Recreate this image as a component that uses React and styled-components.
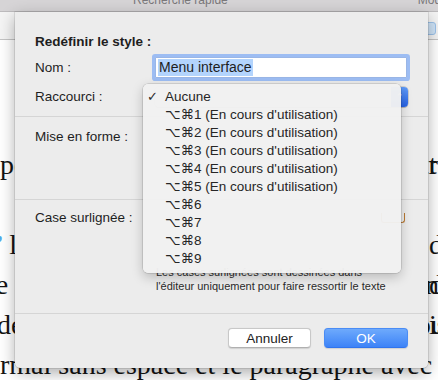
import React from 'react';
import styled, { createGlobalStyle } from 'styled-components';

const GlobalStyle = createGlobalStyle`
  html, body { margin: 0; padding: 0; background: #fff; overflow: hidden; }
  body { width: 438px; height: 380px; }
`;

const Screen = styled.div`
  position: relative;
  width: 438px;
  height: 380px;
  overflow: hidden;
  display: flex;
  flex-direction: column;
  font-family: "Liberation Sans", "DejaVu Sans", sans-serif;
`;

const TitleStrip = styled.div`
  flex: none;
  height: 11px;
  background: #d6d4d6;
  border-bottom: 1px solid #bdbbbd;
  display: flex;
  gap: 190px;
  padding-left: 133px;
  overflow: hidden;
`;

const StripLabel = styled.span`
  margin-top: -6px;
  font-size: 12px;
  line-height: 12px;
  color: #7a787a;
  white-space: nowrap;
`;

const Toolbar = styled.div`
  flex: none;
  height: 27px;
  background: #f4f4f4;
  border-bottom: 1px solid #c4c4c4;
  display: flex;
  justify-content: flex-end;
  align-items: flex-start;
`;

const ToolButton = styled.div`
  margin-top: 10px;
  margin-right: 2px;
  width: 30px;
  height: 11px;
  border-radius: 3px;
  background: #cfe4f8;
  border: 1px solid #9cc2ea;
`;

const Document = styled.div`
  flex: 1;
  background: #fff;
  padding-top: 105px;
  font-family: "Liberation Serif", serif;
  font-size: 28px;
  line-height: 40px;
  color: #141414;
`;

const Line = styled.div`
  display: grid;
  grid-template-columns: 429px auto;
  height: 40px;
  white-space: nowrap;
`;

const LeftText = styled.span`
  grid-column: ${p => (p.$full ? '1 / -1' : '1')};
  text-indent: ${p => p.$indent || 0}px;
  overflow: visible;
`;

const RightText = styled.span`
  grid-column: 2;
`;

const Accent = styled.span`
  color: #4ea9ea;
`;

const Sheet = styled.div`
  position: absolute;
  left: 15px;
  top: 12px;
  width: 413px;
  height: 356px;
  background: #ececec;
  border-radius: 0 0 5px 5px;
  box-shadow: 0 5px 16px rgba(0, 0, 0, 0.32), 0 0 0 0.5px rgba(0, 0, 0, 0.18);
  display: flex;
  flex-direction: column;
  font-size: 13.5px;
  color: #1e1e1e;
`;

const Section = styled.div`
  flex: none;
  height: ${p => p.$h}px;
  box-sizing: border-box;
  padding: ${p => p.$pt}px 21px 0 20px;
  display: flex;
  flex-direction: column;
`;

const Divider = styled.div`
  flex: none;
  height: 1px;
  background: #d5d5d5;
`;

const Title = styled.div`
  font-weight: bold;
  line-height: 16px;
`;

const FieldRow = styled.div`
  display: grid;
  grid-template-columns: 120px 1fr;
  align-items: center;
  margin-top: ${p => p.$mt || 0}px;
`;

const Label = styled.div`
  line-height: 16px;
  white-space: nowrap;
`;

const TextField = styled.div`
  height: 21px;
  box-sizing: border-box;
  background: #fff;
  border: 1px solid #9ab6e6;
  box-shadow: 0 0 0 3px #9dbdf3;
  border-radius: 1px;
  padding-left: 2px;
  display: flex;
  align-items: center;
  font-size: 14px;
`;

const Selection = styled.span`
  background: #b3d4fd;
  line-height: 17px;
  padding: 0 1px;
`;

const PopupButton = styled.div`
  height: 20px;
  margin-right: -1px;
  border-radius: 4px;
  background: #fff;
  box-shadow: 0 0 0 0.5px rgba(0, 0, 0, 0.25), 0 1px 1px rgba(0, 0, 0, 0.15);
  display: flex;
  justify-content: flex-end;
  overflow: hidden;
`;

const PopupCap = styled.div`
  width: 17px;
  background: linear-gradient(#5f9bf8, #2662e6);
  color: #fff;
  font-size: 9px;
  display: flex;
  align-items: center;
  justify-content: center;
`;

const ControlSlot = styled.div`
  display: flex;
  justify-content: flex-end;
  align-items: center;
  height: 16px;
`;

const Swatch = styled.div`
  width: 22px;
  height: 9px;
  border: 1px solid #b97a34;
  border-top: none;
  border-radius: 0 0 3px 3px;
  margin-right: 2px;
`;

const Hint = styled.div`
  grid-column: 2;
  margin-top: 40px;
  padding-left: 1px;
  font-size: 11px;
  line-height: 13.5px;
  color: #2a2a2a;
  white-space: nowrap;
`;

const Footer = styled.div`
  flex: 1;
  display: flex;
  justify-content: flex-end;
  align-items: flex-start;
  gap: 13px;
  padding: 14px 20px 0 0;
`;

const Button = styled.button`
  width: ${p => p.$w}px;
  height: 20px;
  margin: 0;
  padding: 0;
  font-family: inherit;
  font-size: 13.5px;
  border-radius: 4px;
  border: ${p => (p.$primary ? '1px solid #4a8cf5' : '1px solid #c8c8c8')};
  border-bottom-color: ${p => (p.$primary ? '#2f74ee' : '#b0b0b0')};
  background: ${p => (p.$primary ? 'linear-gradient(#6eaafc, #3d83f7)' : '#fff')};
  color: ${p => (p.$primary ? '#fff' : '#222')};
  box-shadow: 0 0.5px 1px rgba(0, 0, 0, 0.12);
`;

const Menu = styled.div`
  position: absolute;
  left: 128px;
  top: 72px;
  width: 258px;
  height: 189px;
  box-sizing: border-box;
  padding: 4px 0 5px;
  border-radius: 5px;
  background: rgba(241, 241, 241, 0.97);
  box-shadow: 0 4px 12px rgba(0, 0, 0, 0.22), 0 0 0 0.5px rgba(0, 0, 0, 0.2);
`;

const MenuItem = styled.div`
  display: grid;
  grid-template-columns: 18px 1fr;
  padding-left: 4px;
  height: 18px;
  line-height: 18px;
  color: #262626;
  white-space: nowrap;
`;

const Check = styled.span`
  font-family: "DejaVu Sans", sans-serif;
  font-size: 13px;
  font-weight: bold;
  color: #2b2b2b;
`;

const shortcuts = [
  { key: 'none', label: 'Aucune', checked: true },
  { key: '1', label: '⌥⌘1 (En cours d\'utilisation)' },
  { key: '2', label: '⌥⌘2 (En cours d\'utilisation)' },
  { key: '3', label: '⌥⌘3 (En cours d\'utilisation)' },
  { key: '4', label: '⌥⌘4 (En cours d\'utilisation)' },
  { key: '5', label: '⌥⌘5 (En cours d\'utilisation)' },
  { key: '6', label: '⌥⌘6' },
  { key: '7', label: '⌥⌘7' },
  { key: '8', label: '⌥⌘8' },
  { key: '9', label: '⌥⌘9' },
];

export default function App() {
  return (
    <>
      <GlobalStyle />
      <Screen>
        <TitleStrip>
          <StripLabel>Recherche rapide</StripLabel>
          <StripLabel>Mode</StripLabel>
        </TitleStrip>
        <Toolbar>
          <ToolButton />
        </Toolbar>
        <Document>
          <Line>
            <LeftText>pour la mise en forme du texte de la struc</LeftText>
            <RightText>ture</RightText>
          </Line>
          <Line />
          <Line>
            <LeftText $indent={-5}><Accent>’</Accent> les styles de paragraphe sont utilisés</LeftText>
            <RightText>de</RightText>
          </Line>
          <Line>
            <LeftText $indent={-12}>le contenu de chaque partie du document</LeftText>
            <RightText>d</RightText>
          </Line>
          <Line>
            <LeftText $indent={-3}>de la même manière que dans la liste ou</LeftText>
            <RightText>is</RightText>
          </Line>
          <Line>
            <LeftText $full $indent={-28}>normal sans espace et le paragraphe avec</LeftText>
          </Line>
        </Document>

        <Sheet>
          <Section $h={104} $pt={22}>
            <Title>Redéfinir le style :</Title>
            <FieldRow $mt={7}>
              <Label>Nom :</Label>
              <TextField>
                <Selection>Menu interface</Selection>
              </TextField>
            </FieldRow>
            <FieldRow $mt={9}>
              <Label>Raccourci :</Label>
              <PopupButton>
                <PopupCap>⌃</PopupCap>
              </PopupButton>
            </FieldRow>
          </Section>
          <Divider />
          <Section $h={82} $pt={12}>
            <FieldRow>
              <Label>Mise en forme :</Label>
            </FieldRow>
          </Section>
          <Divider />
          <Section $h={113} $pt={10}>
            <FieldRow>
              <Label>Case surlignée :</Label>
              <ControlSlot>
                <Swatch />
              </ControlSlot>
              <Hint>
                Les cases surlignées sont dessinées dans
                <br />
                l'éditeur uniquement pour faire ressortir le texte
              </Hint>
            </FieldRow>
          </Section>
          <Divider />
          <Footer>
            <Button $w={83}>Annuler</Button>
            <Button $w={84} $primary>OK</Button>
          </Footer>

          <Menu>
            {shortcuts.map(item => (
              <MenuItem key={item.key}>
                <Check>{item.checked ? '✓' : ''}</Check>
                <span>{item.label}</span>
              </MenuItem>
            ))}
          </Menu>
        </Sheet>
      </Screen>
    </>
  );
}
